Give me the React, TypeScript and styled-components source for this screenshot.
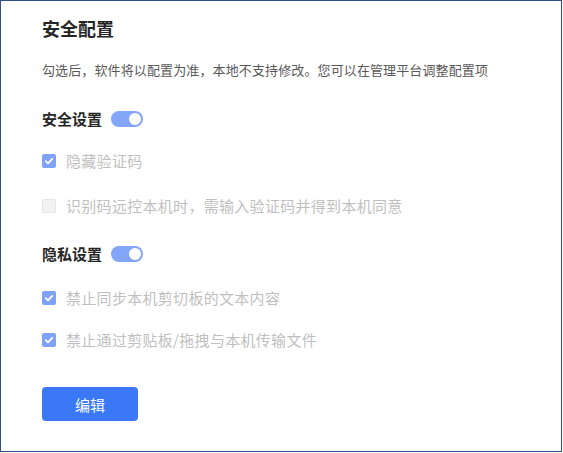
import React from "react";
import styled, { createGlobalStyle } from "styled-components";

const Global = createGlobalStyle`
  html, body { margin: 0; padding: 0; background: #fff; }
  body { font-family: "Noto Sans CJK SC", "Noto Sans", sans-serif; }
`;

const Frame = styled.div`
  box-sizing: border-box;
  width: 562px;
  height: 452px;
  border: 1px solid #2d4f8e;
  padding: 15px 0 0 41px;
  display: flex;
  flex-direction: column;
  align-items: flex-start;
`;

const Title = styled.h1`
  margin: 0;
  font-size: 18px;
  line-height: 24px;
  font-weight: 700;
  color: #262626;
`;

const Desc = styled.p`
  margin: 20px 0 0;
  font-size: 13px;
  line-height: 20px;
  letter-spacing: 0.12px;
  color: #595959;
`;

const SectionHead = styled.div<{ $mt: number }>`
  margin-top: ${(p) => p.$mt}px;
  display: flex;
  align-items: center;
  gap: 9px;
  font-size: 15px;
  line-height: 22px;
  font-weight: 700;
  color: #262626;
`;

const Toggle = styled.span`
  position: relative;
  width: 32px;
  height: 16px;
  border-radius: 8px;
  background: #84a6f8;
  &::after {
    content: "";
    position: absolute;
    top: 2px;
    right: 2px;
    width: 12px;
    height: 12px;
    border-radius: 50%;
    background: #fff;
  }
`;

const Item = styled.label<{ $mt: number }>`
  margin-top: ${(p) => p.$mt}px;
  display: flex;
  align-items: center;
  gap: 10px;
  font-size: 15px;
  line-height: 22px;
  letter-spacing: 0.3px;
  color: #bfbfbf;
`;

const Box = styled.span<{ $checked: boolean }>`
  width: 14px;
  height: 14px;
  box-sizing: border-box;
  border-radius: 2px;
  display: flex;
  align-items: center;
  justify-content: center;
  background: ${(p) => (p.$checked ? "#7ea2f8" : "#f2f2f2")};
  border: 1px solid ${(p) => (p.$checked ? "#7ea2f8" : "#e6e6e6")};
`;

const Button = styled.button`
  margin-top: 36px;
  width: 96px;
  height: 34px;
  border: none;
  border-radius: 4px;
  background: #3a78f6;
  color: #fff;
  font-family: inherit;
  font-size: 15px;
  cursor: pointer;
`;

const Check = () => (
  <svg width="10" height="10" viewBox="0 0 10 10">
    <path d="M1.8 5.2 L4 7.3 L8.2 2.8" fill="none" stroke="#fff" strokeWidth="1.8" strokeLinecap="round" strokeLinejoin="round" />
  </svg>
);

const CheckItem = ({ checked, text, mt }: { checked: boolean; text: string; mt: number }) => (
  <Item $mt={mt}>
    <Box $checked={checked}>{checked && <Check />}</Box>
    {text}
  </Item>
);

export default function App() {
  return (
    <>
      <Global />
      <Frame>
        <Title>安全配置</Title>
        <Desc>勾选后，软件将以配置为准，本地不支持修改。您可以在管理平台调整配置项</Desc>
        <SectionHead $mt={28}>
          安全设置
          <Toggle />
        </SectionHead>
        <CheckItem mt={20} checked text="隐藏验证码" />
        <CheckItem mt={23} checked={false} text="识别码远控本机时，需输入验证码并得到本机同意" />
        <SectionHead $mt={26}>
          隐私设置
          <Toggle />
        </SectionHead>
        <CheckItem mt={22} checked text="禁止同步本机剪切板的文本内容" />
        <CheckItem mt={20} checked text="禁止通过剪贴板/拖拽与本机传输文件" />
        <Button>编辑</Button>
      </Frame>
    </>
  );
}
